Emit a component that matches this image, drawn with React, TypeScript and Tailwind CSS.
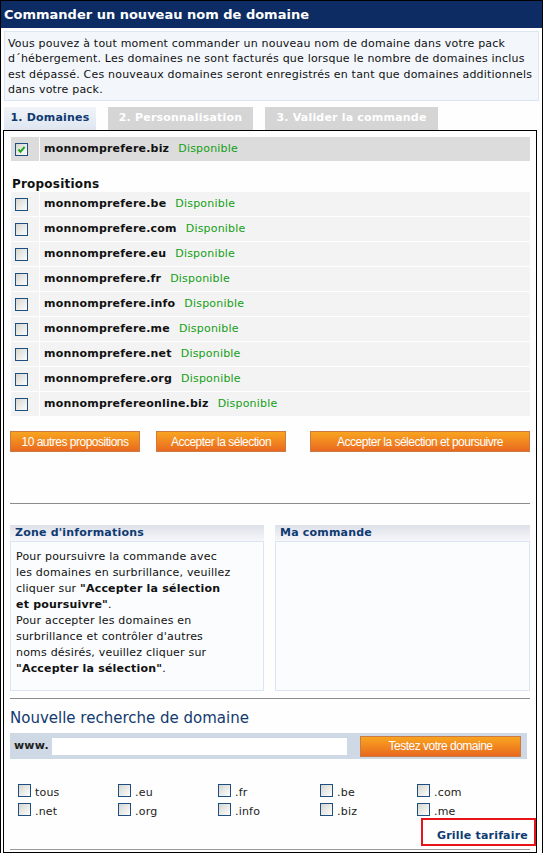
import React from "react";

const proposals = [
  "monnomprefere.be",
  "monnomprefere.com",
  "monnomprefere.eu",
  "monnomprefere.fr",
  "monnomprefere.info",
  "monnomprefere.me",
  "monnomprefere.net",
  "monnomprefere.org",
  "monnomprefereonline.biz"
];

const extensions = ["tous", ".eu", ".fr", ".be", ".com", ".net", ".org", ".info", ".biz", ".me"];

function Box({ checked = false }: { checked?: boolean }) {
  return (
    <span className="flex h-[13px] w-[13px] shrink-0 items-center justify-center border border-[#1d4f80] bg-linear-to-br from-[#d6d6d0] to-[#fdfdfd]">
      {checked ? (
        <svg width="9" height="9" viewBox="0 0 9 9">
          <path d="M1.5 4.5 L3.5 6.8 L7.6 1.8" fill="none" stroke="#1fa51f" strokeWidth="2" />
        </svg>
      ) : null}
    </span>
  );
}

function DomainRow({ name, checked, selected }: { name: string; checked?: boolean; selected?: boolean }) {
  const bg = selected ? "bg-[#dcdcdc]" : "bg-[#f3f3f3]";
  return (
    <div className="ml-[1px] flex h-[24px] gap-[1px]">
      <div className={`flex w-[28px] items-center pl-[4px] ${bg}`}>
        <Box checked={checked} />
      </div>
      <div className={`flex flex-1 items-center gap-[9px] pl-[4px] ${bg}`}>
        <span className="font-bold text-[#111]">{name}</span>
        <span className="text-[#13a013]">Disponible</span>
      </div>
    </div>
  );
}

function OrangeButton({ label, width }: { label: string; width: string }) {
  return (
    <button
      type="button"
      className={`flex h-[21px] items-center justify-center border border-[#c97a45] bg-linear-to-b from-[#f8a41f] to-[#e9681f] font-['Liberation_Sans',Arial,sans-serif] text-[12px] tracking-[-0.5px] text-white ${width}`}
    >
      {label}
    </button>
  );
}

function InfoBox({ title, children, width }: { title: string; children?: React.ReactNode; width: string }) {
  return (
    <div className={`flex h-[166px] flex-col ${width}`}>
      <div className="flex h-[16px] items-center bg-linear-to-b from-[#dde1e8] to-[#f6f7fa] pl-[5px] font-bold text-[#0f3a72]">
        {title}
      </div>
      <div className="flex-1 border border-[#dce5f3] bg-[#fafcfe] pl-[5px] pt-[7px] leading-[16px] text-[#111]">
        {children}
      </div>
    </div>
  );
}

export default function App() {
  return (
    <div className="h-[853px] w-[543px] overflow-hidden border-x border-black bg-[#fdfefd] font-['DejaVu_Sans',Verdana,sans-serif] text-[11px] tracking-[0.2px] text-[#111]">
      <div className="flex h-[28px] items-center border-t border-black bg-[#0c2c63] px-[3px] text-[13px] font-bold tracking-normal text-white">
        Commander un nouveau nom de domaine
      </div>

      <div className="mx-[3px] mt-[3px] whitespace-nowrap border border-[#dbe5f3] bg-[#f3f7fc] px-[3px] pb-[3px] pt-[4px] leading-[15.3px] text-[#111]">
        Vous pouvez à tout moment commander un nouveau nom de domaine dans votre pack
        <br />
        d´hébergement. Les domaines ne sont facturés que lorsque le nombre de domaines inclus
        <br />
        est dépassé. Ces nouveaux domaines seront enregistrés en tant que domaines additionnels
        <br />
        dans votre pack.
      </div>

      <div className="ml-[3px] mt-[6px] flex h-[23px] gap-[12px] font-bold">
        <div className="flex w-[92px] items-center justify-center bg-linear-to-b from-[#f0f4f9] to-[#dfe6f0] text-[#0f3a72]">
          1. Domaines
        </div>
        <div className="flex w-[145px] items-center justify-center bg-[#d5d5d5] text-white">
          2. Personnalisation
        </div>
        <div className="flex w-[173px] items-center justify-center bg-[#d5d5d5] text-white">
          3. Valider la commande
        </div>
      </div>

      <div className="ml-[2px] w-[534px] border border-black px-[6px] pb-[2px] pt-[6px]">
        <DomainRow name="monnomprefere.biz" checked selected />

        <div className="mb-[1px] ml-[2px] mt-[16px] h-[14px] text-[12px] font-bold leading-[14px]">Propositions</div>
        <div className="flex flex-col gap-[1px]">
          {proposals.map((name) => (
            <DomainRow key={name} name={name} />
          ))}
        </div>

        <div className="mt-[15px] flex">
          <OrangeButton label="10 autres propositions" width="w-[130px]" />
          <div className="ml-[16px]">
            <OrangeButton label="Accepter la sélection" width="w-[130px]" />
          </div>
          <div className="ml-[24px]">
            <OrangeButton label="Accepter la sélection et poursuivre" width="w-[220px]" />
          </div>
        </div>

        <div className="mt-[51px] border-t border-[#8c8c8c]" />

        <div className="mt-[21px] flex gap-[11px]">
          <InfoBox title="Zone d'informations" width="w-[254px]">
            <p className="whitespace-nowrap">
              Pour poursuivre la commande avec
              <br />
              les domaines en surbrillance, veuillez
              <br />
              cliquer sur <b>"Accepter la sélection</b>
              <br />
              <b>et poursuivre"</b>.
              <br />
              Pour accepter les domaines en
              <br />
              surbrillance et contrôler d'autres
              <br />
              noms désirés, veuillez cliquer sur
              <br />
              <b>"Accepter la sélection"</b>.
            </p>
          </InfoBox>
          <InfoBox title="Ma commande" width="w-[255px]" />
        </div>

        <div className="mt-[7px] border-t border-[#8c8c8c]" />

        <div className="mt-[10px] h-[18px] text-[15px] leading-[18px] tracking-normal text-[#133a6f]">Nouvelle recherche de domaine</div>

        <div className="mt-[6px] flex h-[26px] w-[517px] items-center bg-[#cfd8e5] pl-[4px]">
          <span className="w-[38px] font-bold text-[#222]">www.</span>
          <div className="h-[17px] w-[295px] bg-white" />
          <div className="ml-[13px]">
            <OrangeButton label="Testez votre domaine" width="w-[161px]" />
          </div>
        </div>

        <div className="mt-[25px] grid grid-cols-[100px_100px_102px_97px_1fr] gap-y-[6px] pl-[8px]">
          {extensions.map((ext) => (
            <div key={ext} className="flex h-[13px] items-center gap-[4px]">
              <Box />
              <span className="pt-[3px] leading-[13px] text-[#222]">{ext}</span>
            </div>
          ))}
        </div>

        <div className="mt-[2px] flex justify-end">
          <div className="-mr-[6px] flex h-[28px] w-[115px] items-end justify-end border-2 border-[#e8141c] pb-[1px] pr-[6px] font-bold leading-[14px] text-[#0f3a72]">
            Grille tarifaire
          </div>
        </div>

        <div className="mt-[3px] border-t border-[#999]" />
      </div>
    </div>
  );
}
